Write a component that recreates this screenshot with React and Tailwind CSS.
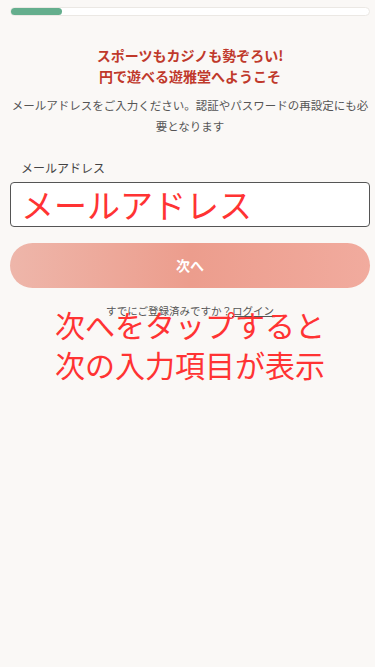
import React from 'react'

const JP = { fontFamily: '"Noto Sans CJK JP", "Noto Sans", sans-serif' }

export default function App(){
  return(
    <div style={JP} className="relative min-h-[667px] w-full bg-[#faf8f6] pl-[10px] pr-[5px] pt-[7px]">
      <div className="h-[9px] w-full rounded-full border border-[#ebe8e4] bg-white">
        <div className="h-full w-[51px] rounded-full bg-[#64ae8d]"/>
      </div>

      <h1 className="mt-[29px] text-center text-[14px] font-bold leading-[21px] text-[#c0392b]">
        スポーツもカジノも勢ぞろい!<br/>円で遊べる遊雅堂へようこそ
      </h1>
      <p className="-mx-[2px] mt-[8px] text-center text-[11.5px] leading-[21px] text-[#555]">
        メールアドレスをご入力ください。認証やパスワードの再設定にも必要となります
      </p>

      <label className="mt-[22px] block pl-[11px] text-[12px] leading-[18px] text-[#444]">メールアドレス</label>
      <div className="relative mt-[5px] h-[45px] w-full rounded-[4px] border border-[#555] bg-white">
        <span className="absolute left-[10px] top-[1px] text-[33px] leading-[40px] text-[#ff3333]">メールアドレス</span>
      </div>

      <button className="mt-[16px] flex h-[45px] w-full items-center justify-center rounded-full bg-gradient-to-r from-[#eeb6aa] via-[#ec9d8d] to-[#f1ab9e] text-[14px] font-bold text-white">
        次へ
      </button>

      <div className="relative mt-[15px] text-center text-[10.5px] leading-[16px] text-[#555]">
        すでにご登録済みですか？<span className="underline">ログイン</span>
        <div className="absolute left-0 right-0 top-[1px] text-center text-[30px] leading-[40px] text-[#ff3333]">
          次へをタップすると<br/>次の入力項目が表示
        </div>
      </div>
    </div>
  )
}
